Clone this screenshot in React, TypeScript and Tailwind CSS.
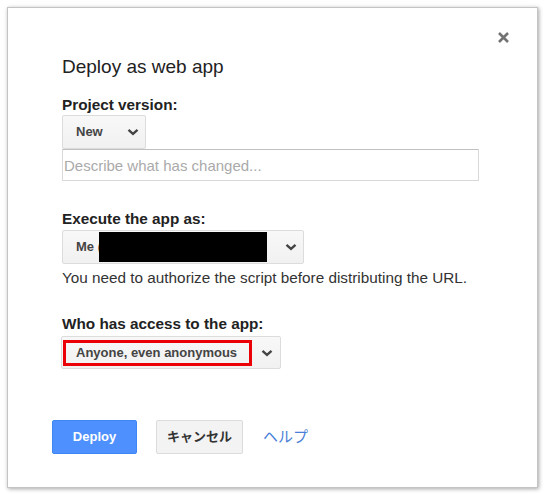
const Chevron = () => (
  <svg width="12" height="8" viewBox="0 0 12 8" className="shrink-0">
    <polyline points="1.5,1.8 6,5.8 10.5,1.8" fill="none" stroke="#444" strokeWidth="2.4" />
  </svg>
);

const App = () => {
  return (
    <div className="w-[545px] h-[494px] bg-white pt-[7px] pl-[7px] font-['Liberation_Sans','Noto_Sans_CJK_JP',sans-serif]">
      <div className="relative w-[531px] h-[481px] bg-white border border-[#c4c4c4] shadow-[1px_1px_4px_rgba(0,0,0,0.35)]">
        {/* close button */}
        <button className="absolute left-[489px] top-[23px] w-[13px] h-[13px]">
          <svg width="13" height="13" viewBox="0 0 13 13">
            <path d="M2 2 L11 11 M11 2 L2 11" stroke="#737373" strokeWidth="2.6" />
          </svg>
        </button>

        <div className="pl-[54px] pt-[48px]">
          <h1 className="text-[19px] leading-[22px] text-[#222]">Deploy as web app</h1>

          {/* Project version */}
          <div className="mt-[18px] text-[15.3px] leading-[17px] font-bold text-[#222]">Project version:</div>
          <div className="mt-[2px] w-[84px] h-[34px] flex items-center justify-between pl-[13px] pr-[6px] bg-gradient-to-b from-[#f8f8f8] to-[#f1f1f1] border border-[#dcdcdc] rounded-[2px]">
            <span className="text-[13px] font-bold text-[#444]">New</span>
            <Chevron />
          </div>
          <input
            className="block w-[417px] h-[32px] pl-[1px] border border-[#d9d9d9] border-t-[#c0c0c0] text-[15px] text-[#222] placeholder:text-[#aaa] outline-none"
            placeholder="Describe what has changed..."
          />

          {/* Execute as */}
          <div className="mt-[29px] text-[15.3px] leading-[17px] font-bold text-[#222]">Execute the app as:</div>
          <div className="mt-[3px] w-[242px] h-[34px] flex items-center justify-between pl-[13px] pr-[6px] bg-gradient-to-b from-[#f8f8f8] to-[#f1f1f1] border border-[#dcdcdc] rounded-[2px]">
            <div className="flex items-center">
              <span className="text-[13px] font-bold text-[#444] whitespace-pre">Me (</span>
              <div className="-ml-[3px] w-[168px] h-[30px] bg-black" />
            </div>
            <Chevron />
          </div>
          <p className="mt-[5px] text-[15.3px] leading-[17px] text-[#333]">
            You need to authorize the script before distributing the URL.
          </p>

          {/* Who has access */}
          <div className="mt-[29px] text-[15.3px] leading-[17px] font-bold text-[#222]">Who has access to the app:</div>
          <div className="mt-[4px] -ml-[1px] w-[220px] h-[33px] flex items-center justify-between pl-[1px] pr-[7px] bg-gradient-to-b from-[#f8f8f8] to-[#f1f1f1] border border-[#dcdcdc] rounded-[2px]">
            <div className="w-[189px] h-[26px] flex items-center pl-[10px] border-[3px] border-[#ec0008]">
              <span className="text-[13px] font-bold text-[#444]">Anyone, even anonymous</span>
            </div>
            <Chevron />
          </div>
        </div>

        {/* Buttons */}
        <div className="mt-[51px] pl-[44px] flex items-center">
          <button className="w-[85px] h-[34px] bg-[#4d90fe] border border-[#3f86f5] rounded-[2px] text-[13px] font-bold text-white">
            Deploy
          </button>
          <button className="ml-[19px] w-[87px] h-[34px] bg-[#f3f3f3] border border-[#dcdcdc] rounded-[2px] text-[13px] font-bold text-[#333]">
            キャンセル
          </button>
          <a className="ml-[20px] text-[15px] text-[#4a7fd8]">ヘルプ</a>
        </div>
      </div>
    </div>
  );
};

export default App;
